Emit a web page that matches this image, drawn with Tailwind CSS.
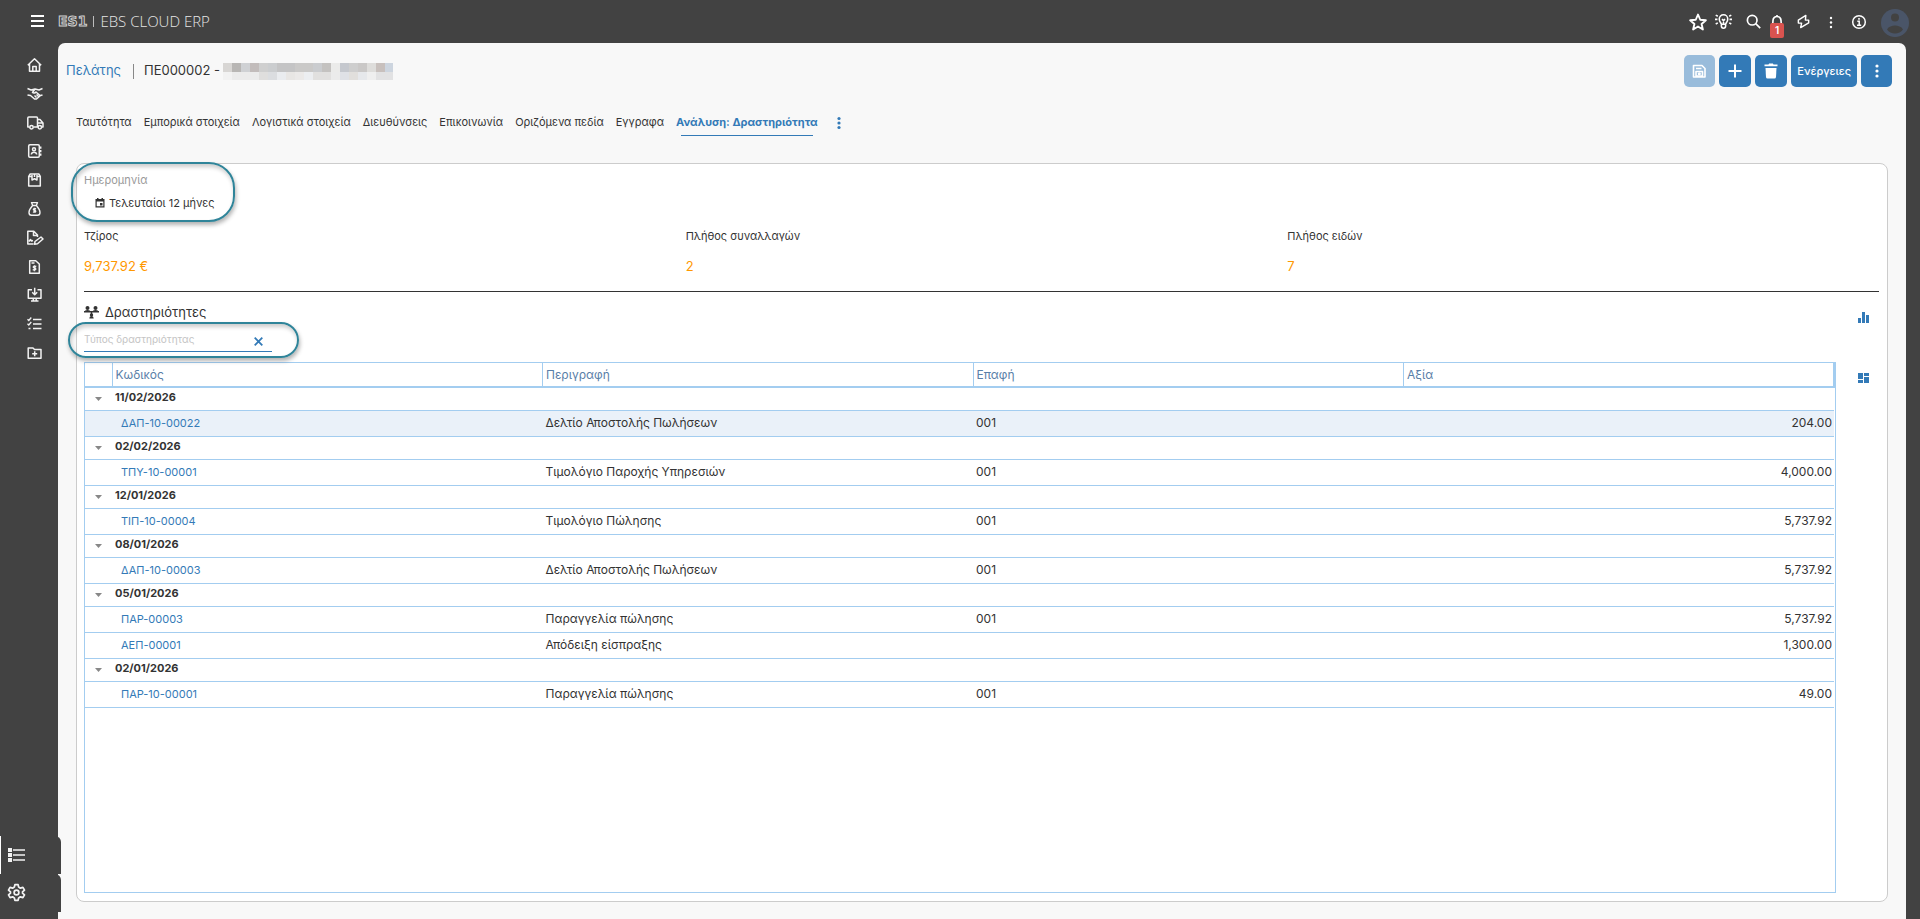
<!DOCTYPE html>
<html lang="el">
<head>
  <meta charset="UTF-8">
  <meta name="viewport" content="width=device-width, initial-scale=1.0">
  <title>EBS Cloud ERP - Πελάτης</title>
  <script src="https://cdn.jsdelivr.net/npm/@tailwindcss/browser@4"></script>
</head>
<body class="min-h-screen flex flex-col bg-[#424242] font-['Inter',sans-serif] text-[#333]">

  <!-- Top bar -->
  <header class="h-[43px] flex items-center pl-[30px] pr-[11px] text-white">
    <button type="button" aria-label="Μενού" class="mr-[13px]">
      <svg class="w-[15px] h-[15px]" viewBox="0 0 15 15" fill="none" stroke="currentColor" stroke-width="2"><path d="M1 2h13M1 7h13M1 12h13"/></svg>
    </button>
    <span class="font-['DejaVu_Sans',sans-serif] font-bold text-[14px] text-transparent [-webkit-text-stroke:1px_#cfcfcf]">ES1</span>
    <span class="mx-[6px] w-px h-[11px] bg-[#bdbdbd]"></span>
    <span class="font-['Open_Sans',sans-serif] font-light text-[15px] text-[#e6e6e6]">EBS CLOUD ERP</span>

    <div class="ml-auto flex items-center">
      <button type="button" aria-label="Αγαπημένα">
        <svg class="w-[18px] h-[18px]" viewBox="0 0 24 24" fill="none" stroke="currentColor" stroke-width="2.500" stroke-linejoin="round"><path d="M12 2l3 7 7.500.7-5.700 5 1.700 7.300L12 18l-6.500 4 1.700-7.300-5.700-5L9 9z"/></svg>
      </button>
      <button type="button" aria-label="Ιδέες" class="ml-[8px]">
        <svg class="w-[17px] h-[17px]" viewBox="0 0 24 24" fill="none" stroke="currentColor" stroke-width="2.200"><path d="M9 16c0-2-3-3-3-7.500a6 6 0 0 1 12 0c0 4.500-3 5.500-3 7.500v2.500a3 3 0 0 1-6 0zM9 16h6M12 16v-5M10 8.500l2 2.500 2-2.500M0 9h3.500M20.500 9H24M1 3l3 1.500M23 3l-3 1.500M1 15.500l3-1.500M23 15.500l-3-1.500"/></svg>
      </button>
      <button type="button" aria-label="Αναζήτηση" class="ml-[14px]">
        <svg class="w-[15px] h-[15px]" viewBox="0 0 15 15" fill="none" stroke="currentColor" stroke-width="1.700"><circle cx="6.200" cy="6.200" r="4.800"/><path d="M9.700 9.700l4.500 4.500"/></svg>
      </button>
      <button type="button" aria-label="Ειδοποιήσεις" class="relative ml-[9px]">
        <svg class="w-[14px] h-[15px]" viewBox="0 0 14 15" fill="none" stroke="currentColor" stroke-width="1.700"><path d="M2 11.500c1-1 1-2 1-5a4 4 0 0 1 8 0c0 3 0 4 1 5zM6 13.500h2M7 1v1.500"/></svg>
        <span class="absolute left-0 top-[9px] w-[14px] h-[15px] rounded-[2px] bg-[#d9534f] text-[10px] leading-[15px] font-semibold text-center">1</span>
      </button>
      <button type="button" aria-label="Γρήγορες ενέργειες" class="ml-[12px]">
        <svg class="w-[15px] h-[15px]" viewBox="0 0 16 16" fill="none" stroke="currentColor" stroke-width="1.500" stroke-linejoin="round"><path d="M10.500 1.500L2.500 6.500v3.200h3.500L5 14.500l8.500-5V6.500H10z"/></svg>
      </button>
      <button type="button" aria-label="Περισσότερα" class="ml-[12px]">
        <svg class="w-[16px] h-[16px]" viewBox="0 0 16 16" fill="currentColor"><circle cx="8" cy="4" r="1.200"/><circle cx="8" cy="8.500" r="1.200"/><circle cx="8" cy="13" r="1.200"/></svg>
      </button>
      <button type="button" aria-label="Πληροφορίες" class="ml-[12px]">
        <svg class="w-[16px] h-[16px]" viewBox="0 0 16 16" fill="none" stroke="currentColor" stroke-width="1.500"><circle cx="8" cy="8" r="6.300"/><path d="M6.300 7.200H8.200V11.300M6 11.300h4.200"/><path d="M7.200 4.800h1.600" stroke-width="1.700"/></svg>
      </button>
      <button type="button" aria-label="Λογαριασμός" class="ml-[14px] mt-[2px] text-[#4a5568]">
        <svg class="w-[28px] h-[28px]" viewBox="0 0 28 28" fill="currentColor"><circle cx="14" cy="14" r="14"/><circle cx="14" cy="8.500" r="4" fill="#424242"/><path d="M6 20.500c1.500-3 5-4 8-4s6.500 1 8 4c-1.800 2.500-4.800 4-8 4s-6.200-1.500-8-4z" fill="#424242"/></svg>
      </button>
    </div>
  </header>

  <div class="flex-1 flex">
    <!-- Side menu -->
    <aside class="w-[58px] shrink-0 flex flex-col justify-between pt-[14px] pb-[7px] text-[#f2f2f2]">
      <nav class="h-[304px] pl-[27px] flex flex-col justify-between">
        <a href="#" aria-label="Αρχική"><svg class="w-[16px] h-[16px]" viewBox="0 0 16 16" fill="none" stroke="currentColor" stroke-width="1.500" stroke-linejoin="round"><path d="M.8 8.200L7.500 1.800l6.700 6.400M2.500 7v7.300h10V7M5.800 14V9.500h3.400V14"/></svg></a>
        <a href="#" aria-label="Συνεργασίες"><svg class="w-[16px] h-[16px]" viewBox="0 0 16 16" fill="none" stroke="currentColor" stroke-width="1.500" stroke-linejoin="round"><path d="M.5 2.500L4 4l4-1 4 1 3.500-1.500M.5 9l3 .5 4 3.500h2l4-3.500 2-.5M8 3L5.500 6.500c1 1 2.500.7 3.500-.5l4 3.500M7.500 9.500l2 2M9.500 8.500l2 2"/></svg></a>
        <a href="#" aria-label="Αποστολές"><svg class="w-[17px] h-[16px]" viewBox="0 0 17 16" fill="none" stroke="currentColor" stroke-width="1.500" stroke-linejoin="round"><path d="M2.500 12H.8V3q0-1 1-1h7.700q1 0 1 1v9H6.500M10.500 4.500h2.500l3 3.500v4h-1M11 8h5"/><circle cx="4.500" cy="12.200" r="1.700"/><circle cx="12.800" cy="12.200" r="1.700"/></svg></a>
        <a href="#" aria-label="Επαφές"><svg class="w-[16px] h-[16px]" viewBox="0 0 16 16" fill="none" stroke="currentColor" stroke-width="1.500"><rect x="1.700" y="1.700" width="10.600" height="12.600" rx="1.200"/><circle cx="7" cy="6.300" r="1.500"/><path d="M4.300 11.500c.3-3 5.100-3 5.400 0M13.700 3.500v2.300M13.700 7v2.300M13.700 10.500v2.300"/></svg></a>
        <a href="#" aria-label="Είδη"><svg class="w-[16px] h-[16px]" viewBox="0 0 16 16" fill="none" stroke="currentColor" stroke-width="1.500" stroke-linejoin="round"><path d="M1.700 4.500l1.500-2.500h8.600l1.500 2.500V14H1.700zM1.700 4.500H5M10 4.500h3.300M5 3v5l2.500-1.200L10 8V3M7.500 2v3"/></svg></a>
        <a href="#" aria-label="Οικονομικά"><svg class="w-[16px] h-[16px]" viewBox="0 0 16 16" fill="none" stroke="currentColor" stroke-width="1.400" stroke-linejoin="round"><path d="M5.700 4.500L4.500 1.600h6L9.300 4.500zM5.700 4.500C4 6.500 2 8.500 2 11.500 2 13.500 3 14.300 4.500 14.300h6c1.500 0 2.500-.8 2.500-2.800 0-3-2-5-3.700-7M9 7.800c-2.500-.8-3.500 1-1.500 1.500s1.500 2.500-1.500 1.600M7.500 6.800v5"/></svg></a>
        <a href="#" aria-label="Συμβάσεις"><svg class="w-[17px] h-[16px]" viewBox="0 0 17 16" fill="none" stroke="currentColor" stroke-width="1.500" stroke-linejoin="round"><path d="M6.500 14H.8V1.200h6L10.500 5V7M6.500 1.500v4h3.800M2 11.500l1.500-2 1 1.500 1.500-.5M7.500 14.200l.5-2.700 6-4.500 2 2-5.500 4.800z"/></svg></a>
        <a href="#" aria-label="Τιμολόγια"><svg class="w-[16px] h-[16px]" viewBox="0 0 16 16" fill="none" stroke="currentColor" stroke-width="1.500" stroke-linejoin="round"><path d="M2.700 14.300V1.700h6L12.300 5v9.300zM4.500 4h3M9.300 7.500c-3-.9-4 .9-1.800 1.500s1.500 2.500-1.800 1.600M7.500 6.300v6"/></svg></a>
        <a href="#" aria-label="Λήψεις"><svg class="w-[16px] h-[16px]" viewBox="0 0 16 16" fill="none" stroke="currentColor" stroke-width="1.500" stroke-linejoin="round"><path d="M5 2.700H1.300v8.600h12.700V2.700h-3.500M7.700.8v6.700M5.200 5.300l2.500 2.500 2.500-2.500M4 14h7.500M6.300 11.300V14M9.200 11.300V14"/></svg></a>
        <a href="#" aria-label="Εργασίες"><svg class="w-[16px] h-[16px]" viewBox="0 0 16 16" fill="none" stroke="currentColor" stroke-width="1.300"><path d="M6 3.500h8.500M6 8h8.500M6 12.500h8.500M.5 3.200l1.300 1.300 2.500-3M.5 7.700L1.800 9l2.500-3M1.500 12.500h2"/></svg></a>
        <a href="#" aria-label="Φάκελοι"><svg class="w-[16px] h-[16px]" viewBox="0 0 16 16" fill="none" stroke="currentColor" stroke-width="1.500" stroke-linejoin="round"><path d="M1.200 3h4.800l1.500 1.500h6.500v8.800H1.200zM7.700 6.200v5M5.200 8.700h5"/></svg></a>
      </nav>
      <div class="w-[61px] relative z-10">
        <button type="button" aria-label="Λίστα" class="block w-full h-[38px] pl-[7px] bg-[#424242] border-l border-white rounded-tr-[6px]">
          <svg class="w-[17px] h-[16px]" viewBox="0 0 17 16" fill="currentColor"><path d="M0 1h4v4H0zM0 6h4v4H0zM0 11h4v4H0zM5 2.300h12v1.500H5zM5 7.300h12v1.500H5zM5 12.300h12v1.500H5z"/></svg>
        </button>
        <div class="bg-[linear-gradient(to_right,#424242_58px,#f8f8f8_58px)]">
          <button type="button" aria-label="Ρυθμίσεις" class="block w-full h-[38px] pl-[7px] pb-[2px] bg-[#424242] rounded-tr-[6px]">
            <svg class="w-[19px] h-[19px]" viewBox="0 0 24 24" fill="none" stroke="currentColor" stroke-width="2.200" stroke-linejoin="round"><circle cx="12" cy="12" r="3"/><path d="M10 2h4l.7 3.200 2.200 1.300 3.200-1 2 3.500-2.500 2.200v1.600l2.500 2.200-2 3.500-3.200-1-2.200 1.300L14 22h-4l-.7-3.200-2.200-1.300-3.200 1-2-3.500 2.500-2.200v-1.600L1.900 9l2-3.500 3.200 1 2.200-1.300z"/></svg>
          </button>
        </div>
      </div>
    </aside>

    <main class="flex-1 mr-[14px] rounded-t-[7px] bg-[#f8f8f8] flex flex-col pb-[17px]">
      <!-- Record title and actions -->
      <div class="flex items-center pt-[12px] pl-[8px] pr-[14px]">
        <h1 class="flex items-center text-[13px]">
          <a href="#" class="text-[#337ab7]">Πελάτης</a>
          <span class="w-px h-[15px] ml-[12px] mr-[10px] bg-[#888]"></span>
          <span>ΠΕ000002 -</span>
          <!-- Masked customer name -->
          <svg class="ml-[3px] w-[170px] h-[17px]" viewBox="0 0 170 17" shape-rendering="crispEdges">
            <path fill="#d8d6d4" d="M0 0h9v9H0z"/><path fill="#b8b6b4" d="M9 0h9v9H9z"/><path fill="#cfd1d4" d="M18 0h9v9h-9z"/>
            <path fill="#c2bcbb" d="M27 0h9v9h-9z"/><path fill="#cfcfcf" d="M36 0h9v9h-9z"/><path fill="#cbcdcf" d="M45 0h9v9h-9z"/>
            <path fill="#c4c4c5" d="M54 0h18v9H54z"/><path fill="#cac9c8" d="M72 0h18v9H72z"/><path fill="#cacccf" d="M90 0h9v9h-9z"/>
            <path fill="#c4c2c0" d="M99 0h9v9h-9z"/><path fill="#ebebea" d="M108 0h9v9h-9z"/><path fill="#c5c8ce" d="M117 0h9v9h-9z"/>
            <path fill="#cecece" d="M126 0h9v9h-9z"/><path fill="#cac8c7" d="M135 0h9v9h-9z"/><path fill="#dedddb" d="M144 0h9v9h-9z"/>
            <path fill="#c8c0bd" d="M153 0h9v9h-9z"/><path fill="#cdd5df" d="M162 0h8v9h-8z"/>
            <path fill="#f2f2f2" d="M0 9h9v8H0z"/><path fill="#ebebeb" d="M9 9h27v8H9z"/><path fill="#dfdedd" d="M36 9h9v8h-9z"/>
            <path fill="#dbdde0" d="M45 9h9v8h-9z"/><path fill="#eaecef" d="M54 9h9v8h-9z"/><path fill="#e8e6e4" d="M63 9h9v8h-9z"/>
            <path fill="#ebe9e8" d="M72 9h9v8h-9z"/><path fill="#eceef1" d="M81 9h9v8h-9z"/><path fill="#e1e0df" d="M90 9h18v8H90z"/>
            <path fill="#ebebeb" d="M108 9h9v8h-9z"/><path fill="#dfe1e6" d="M117 9h9v8h-9z"/><path fill="#e1dfdc" d="M126 9h9v8h-9z"/>
            <path fill="#e6e8eb" d="M135 9h9v8h-9z"/><path fill="#efefef" d="M144 9h9v8h-9z"/><path fill="#e2e2e3" d="M153 9h17v8h-17z"/>
          </svg>
        </h1>
        <div class="ml-auto flex gap-[4px] text-white">
          <button type="button" disabled aria-label="Αποθήκευση" class="w-[31px] h-[32px] rounded-[5px] bg-[#99bcdb] flex items-center justify-center">
            <svg class="w-[15px] h-[15px]" viewBox="0 0 15 15" fill="none" stroke="currentColor" stroke-width="2" stroke-linejoin="round"><path d="M1.500 1.500h8.500L13 4.500V13H1.500zM4 4.500h5.500M4 7.500h6.500v4.500H4z" stroke-width="1.600"/><circle cx="7.300" cy="9.700" r=".8" stroke-width="1.500"/></svg>
          </button>
          <button type="button" aria-label="Νέο" class="w-[32px] h-[32px] rounded-[5px] bg-[#337ab7] flex items-center justify-center">
            <svg class="w-[14px] h-[14px]" viewBox="0 0 14 14" stroke="currentColor" stroke-width="2"><path d="M7 .5v13M.5 7h13"/></svg>
          </button>
          <button type="button" aria-label="Διαγραφή" class="w-[32px] h-[32px] rounded-[5px] bg-[#337ab7] flex items-center justify-center">
            <svg class="w-[14px] h-[16px]" viewBox="0 0 14 16" fill="currentColor"><path d="M1.500 5h11L12 14q-.1 1.500-1.500 1.500h-7Q2.100 15.500 2 14z"/><path d="M.5 1.500h4l.6-1h3.800l.6 1h4v1.800H.5z"/></svg>
          </button>
          <button type="button" class="h-[32px] px-[6px] rounded-[5px] bg-[#337ab7] text-[11px] font-medium">Ενέργειες</button>
          <button type="button" aria-label="Περισσότερες ενέργειες" class="w-[31px] h-[32px] rounded-[5px] bg-[#337ab7] flex items-center justify-center">
            <svg class="w-[4px] h-[14px]" viewBox="0 0 4 14" fill="currentColor"><circle cx="2" cy="2" r="1.600"/><circle cx="2" cy="7" r="1.600"/><circle cx="2" cy="12" r="1.600"/></svg>
          </button>
        </div>
      </div>

      <!-- Tabs -->
      <nav class="mt-[22px] pl-[18px] flex items-center gap-[12px] text-[11px] leading-[27px]">
        <a href="#">Ταυτότητα</a>
        <a href="#">Εμπορικά στοιχεία</a>
        <a href="#">Λογιστικά στοιχεία</a>
        <a href="#">Διευθύνσεις</a>
        <a href="#">Επικοινωνία</a>
        <a href="#">Οριζόμενα πεδία</a>
        <a href="#">Εγγραφα</a>
        <a href="#" aria-current="page" class="relative font-bold text-[#337ab7]">Ανάλυση: Δραστηριότητα<span class="absolute inset-x-[5px] bottom-0 h-px bg-[#337ab7]"></span></a>
        <button type="button" aria-label="Περισσότερες καρτέλες" class="ml-[7px] text-[#337ab7]">
          <svg class="w-[4px] h-[14px]" viewBox="0 0 4 14" fill="currentColor"><circle cx="2" cy="2.500" r="1.600"/><circle cx="2" cy="7" r="1.600"/><circle cx="2" cy="11.500" r="1.600"/></svg>
        </button>
      </nav>

      <section class="flex-1 mt-[27px] mx-[18px] pl-[7px] pr-[8px] pb-[8px] border border-[#ccc] rounded-[8px] bg-white flex flex-col">
        <div class="relative self-start pt-[8px] text-[11px] leading-[16px]">
          <span class="absolute -left-[13px] -top-[2px] w-[164px] h-[60px] border-2 border-[#2f8499] rounded-[26px] shadow-[1px_3px_4px_rgba(0,0,0,0.3),inset_1px_3px_4px_rgba(0,0,0,0.2)] pointer-events-none"></span>
          <div class="text-[#999]">Ημερομηνία</div>
          <button type="button" class="mt-[7px] ml-[11px] flex items-center gap-[4px]">
            <svg class="w-[10px] h-[10px]" viewBox="0 0 10 10" fill="currentColor"><path d="M1 1h1V0h1.500v1h3V0H8v1h1.500v8.500H.5V1zM1.700 3.500v4.800h6.600V3.500z" fill-rule="evenodd"/><path d="M5 5h2.500v2.500H5z"/></svg>
            Τελευταίοι 12 μήνες
          </button>
        </div>

        <div class="mt-[17px] grid grid-cols-3 gap-[10px] text-[11px] leading-[16px]">
          <div>Τζίρος<div class="mt-[14px] text-[13px] text-[#ff9800]">9,737.92 €</div></div>
          <div>Πλήθος συναλλαγών<div class="mt-[14px] text-[13px] text-[#ff9800]">2</div></div>
          <div>Πλήθος ειδών<div class="mt-[14px] text-[13px] text-[#ff9800]">7</div></div>
        </div>

        <hr class="mt-[17px] border-[#333]">

        <div class="flex-1 flex">
          <div class="flex-1 flex flex-col">
            <h2 class="mt-[10px] flex items-center gap-[6px] text-[13px] leading-[20px]">
              <svg class="w-[15px] h-[13px]" viewBox="0 0 15 13" fill="currentColor"><circle cx="3.500" cy="2" r="2"/><circle cx="11.500" cy="2" r="2"/><path d="M.5 6q0-2 3-2t3 2zM8.500 6q0-2 3-2t3 2zM0 5h15v1.500H0zM6.800 6h1.400v3H6.800z"/><circle cx="7.500" cy="9" r="1.700"/><path d="M5.300 12.500q0-2.500 2.200-2.500t2.200 2.500z"/></svg>
              Δραστηριότητες
            </h2>
            <div class="relative w-[188px] h-[30px] mb-[10px] flex items-center border-b border-[#337ab7]">
              <span class="absolute -left-[16px] top-0 w-[231px] h-[36px] border-2 border-[#2f8499] rounded-full shadow-[1px_3px_4px_rgba(0,0,0,0.3),inset_1px_3px_4px_rgba(0,0,0,0.2)] pointer-events-none"></span>
              <input type="text" aria-label="Τύπος δραστηριότητας" placeholder="Τύπος δραστηριότητας" class="flex-1 min-w-0 pt-[6px] text-[10px] outline-none placeholder:text-[#c4c4c4]">
              <button type="button" aria-label="Καθαρισμός" class="mr-[9px] mt-[9px] text-[#337ab7]">
                <svg class="w-[9px] h-[9px]" viewBox="0 0 9 9" fill="none" stroke="currentColor" stroke-width="1.800"><path d="M.7.700l7.600 7.600M8.300.7L.7 8.300"/></svg>
              </button>
            </div>

            <div class="flex-1 border border-[#a3cdf0]">
              <table class="w-full table-fixed border-collapse text-[12px] text-left">
                <thead class="text-[#5a80a8]">
                  <tr class="h-[24px] border-b-2 border-r-2 border-[#a3cdf0]">
                    <th class="w-[27px] border-r border-[#a3cdf0]"></th>
                    <th class="pl-[3px] font-normal border-r border-[#a3cdf0]">Κωδικός</th>
                    <th class="pl-[3px] font-normal border-r border-[#a3cdf0]">Περιγραφή</th>
                    <th class="pl-[3px] font-normal border-r border-[#a3cdf0]">Επαφή</th>
                    <th class="pl-[3px] font-normal">Αξία</th>
                  </tr>
                </thead>
                <tbody class="[&_tr]:border-b [&_tr]:border-[#a3cdf0] [&_a]:text-[11px] [&_a]:text-[#337ab7]">
                  <tr class="h-[23px]">
                    <td class="pl-[10px]"><svg class="w-[7px] h-[4px]" viewBox="0 0 7 4" fill="#888"><path d="M0 0h7L3.500 4z"/></svg></td>
                    <td colspan="4" class="pl-[3px] pb-[3px] text-[11px] leading-[16px] font-bold">11/02/2026</td>
                  </tr>
                  <tr class="h-[26px] bg-[#eaf1f9]">
                    <td></td>
                    <td class="pl-[9px]"><a href="#">ΔΑΠ-10-00022</a></td>
                    <td class="pl-[3px]">Δελτίο Αποστολής Πωλήσεων</td>
                    <td class="pl-[3px]">001</td>
                    <td class="pr-[2px] text-right">204.00</td>
                  </tr>
                  <tr class="h-[23px]">
                    <td class="pl-[10px]"><svg class="w-[7px] h-[4px]" viewBox="0 0 7 4" fill="#888"><path d="M0 0h7L3.500 4z"/></svg></td>
                    <td colspan="4" class="pl-[3px] pb-[3px] text-[11px] leading-[16px] font-bold">02/02/2026</td>
                  </tr>
                  <tr class="h-[26px]">
                    <td></td>
                    <td class="pl-[9px]"><a href="#">ΤΠΥ-10-00001</a></td>
                    <td class="pl-[3px]">Τιμολόγιο Παροχής Υπηρεσιών</td>
                    <td class="pl-[3px]">001</td>
                    <td class="pr-[2px] text-right">4,000.00</td>
                  </tr>
                  <tr class="h-[23px]">
                    <td class="pl-[10px]"><svg class="w-[7px] h-[4px]" viewBox="0 0 7 4" fill="#888"><path d="M0 0h7L3.500 4z"/></svg></td>
                    <td colspan="4" class="pl-[3px] pb-[3px] text-[11px] leading-[16px] font-bold">12/01/2026</td>
                  </tr>
                  <tr class="h-[26px]">
                    <td></td>
                    <td class="pl-[9px]"><a href="#">ΤΙΠ-10-00004</a></td>
                    <td class="pl-[3px]">Τιμολόγιο Πώλησης</td>
                    <td class="pl-[3px]">001</td>
                    <td class="pr-[2px] text-right">5,737.92</td>
                  </tr>
                  <tr class="h-[23px]">
                    <td class="pl-[10px]"><svg class="w-[7px] h-[4px]" viewBox="0 0 7 4" fill="#888"><path d="M0 0h7L3.500 4z"/></svg></td>
                    <td colspan="4" class="pl-[3px] pb-[3px] text-[11px] leading-[16px] font-bold">08/01/2026</td>
                  </tr>
                  <tr class="h-[26px]">
                    <td></td>
                    <td class="pl-[9px]"><a href="#">ΔΑΠ-10-00003</a></td>
                    <td class="pl-[3px]">Δελτίο Αποστολής Πωλήσεων</td>
                    <td class="pl-[3px]">001</td>
                    <td class="pr-[2px] text-right">5,737.92</td>
                  </tr>
                  <tr class="h-[23px]">
                    <td class="pl-[10px]"><svg class="w-[7px] h-[4px]" viewBox="0 0 7 4" fill="#888"><path d="M0 0h7L3.500 4z"/></svg></td>
                    <td colspan="4" class="pl-[3px] pb-[3px] text-[11px] leading-[16px] font-bold">05/01/2026</td>
                  </tr>
                  <tr class="h-[26px]">
                    <td></td>
                    <td class="pl-[9px]"><a href="#">ΠΑΡ-00003</a></td>
                    <td class="pl-[3px]">Παραγγελία πώλησης</td>
                    <td class="pl-[3px]">001</td>
                    <td class="pr-[2px] text-right">5,737.92</td>
                  </tr>
                  <tr class="h-[26px]">
                    <td></td>
                    <td class="pl-[9px]"><a href="#">ΑΕΠ-00001</a></td>
                    <td class="pl-[3px]">Απόδειξη είσπραξης</td>
                    <td></td>
                    <td class="pr-[2px] text-right">1,300.00</td>
                  </tr>
                  <tr class="h-[23px]">
                    <td class="pl-[10px]"><svg class="w-[7px] h-[4px]" viewBox="0 0 7 4" fill="#888"><path d="M0 0h7L3.500 4z"/></svg></td>
                    <td colspan="4" class="pl-[3px] pb-[3px] text-[11px] leading-[16px] font-bold">02/01/2026</td>
                  </tr>
                  <tr class="h-[26px]">
                    <td></td>
                    <td class="pl-[9px]"><a href="#">ΠΑΡ-10-00001</a></td>
                    <td class="pl-[3px]">Παραγγελία πώλησης</td>
                    <td class="pl-[3px]">001</td>
                    <td class="pr-[2px] text-right">49.00</td>
                  </tr>
                </tbody>
              </table>
            </div>
          </div>

          <div class="w-[43px] pt-[20px] pl-[11px] flex flex-col items-center gap-[50px] text-[#337ab7]">
            <button type="button" aria-label="Γράφημα">
              <svg class="w-[11px] h-[11px]" viewBox="0 0 11 11" fill="currentColor"><path d="M0 6h3v5H0zM4 0h3v11H4zM8 3h3v8H8z"/></svg>
            </button>
            <button type="button" aria-label="Διάταξη">
              <svg class="w-[11px] h-[11px]" viewBox="0 0 11 11" fill="currentColor"><path d="M0 0h5v6H0zM6 0h5v3H6zM0 7h5v3H0zM6 4h5v6H6z"/></svg>
            </button>
          </div>
        </div>
      </section>
    </main>
  </div>
</body>
</html>
